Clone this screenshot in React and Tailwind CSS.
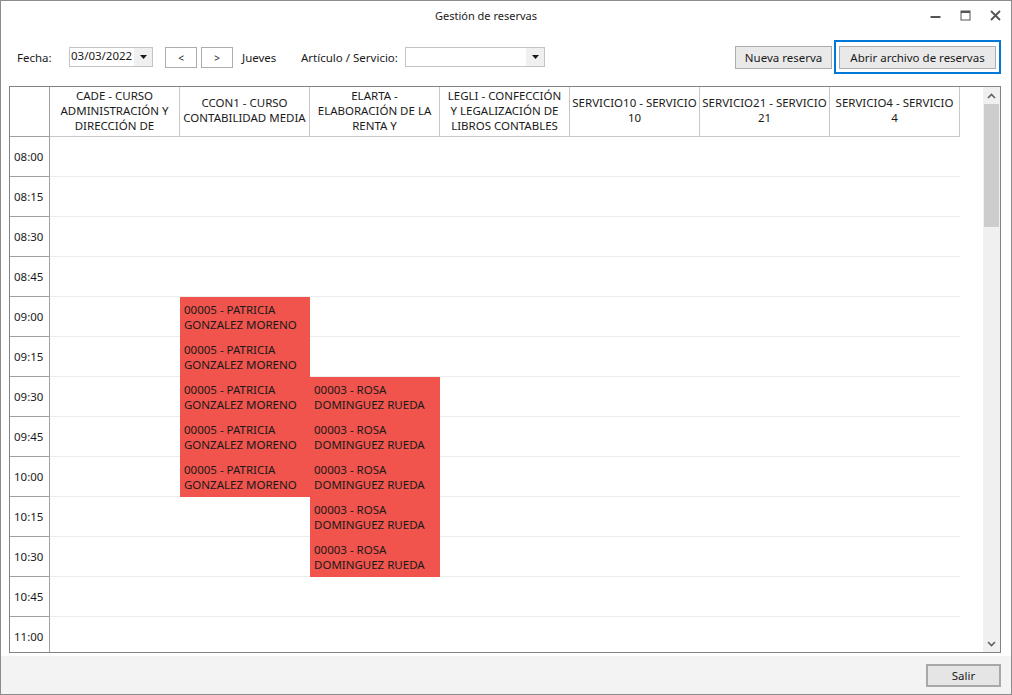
import React from 'react';

const columns = [
  ['CADE - CURSO', 'ADMINISTRACIÓN Y', 'DIRECCIÓN DE'],
  ['CCON1 - CURSO', 'CONTABILIDAD MEDIA'],
  ['ELARTA -', 'ELABORACIÓN DE LA', 'RENTA Y'],
  ['LEGLI - CONFECCIÓN', 'Y LEGALIZACIÓN DE', 'LIBROS CONTABLES'],
  ['SERVICIO10 - SERVICIO', '10'],
  ['SERVICIO21 - SERVICIO', '21'],
  ['SERVICIO4 - SERVICIO', '4'],
];

const times = ['08:00', '08:15', '08:30', '08:45', '09:00', '09:15', '09:30', '09:45', '10:00', '10:15', '10:30', '10:45', '11:00'];

const PATRICIA = ['00005 - PATRICIA', 'GONZALEZ MORENO'];
const ROSA = ['00003 - ROSA', 'DOMINGUEZ RUEDA'];

// bookings by time -> column index
const bookings = {
  '09:00': { 1: PATRICIA },
  '09:15': { 1: PATRICIA },
  '09:30': { 1: PATRICIA, 2: ROSA },
  '09:45': { 1: PATRICIA, 2: ROSA },
  '10:00': { 1: PATRICIA, 2: ROSA },
  '10:15': { 2: ROSA },
  '10:30': { 2: ROSA },
};

const Arrow = () => (
  <svg width="7" height="4" viewBox="0 0 7 4">
    <path d="M0 0h7L3.5 4z" fill="#1a1a1a" />
  </svg>
);

const Chevron = ({ down }) => (
  <svg width="9" height="6" viewBox="0 0 9 6">
    <path d={down ? 'M1 1l3.5 3.5L8 1' : 'M1 5l3.5-3.5L8 5'} fill="none" stroke="#606060" strokeWidth="1.6" />
  </svg>
);

export default function App() {
  return (
    <div
      className="w-[1012px] h-[695px] border border-[#8c8c8c] bg-white flex flex-col text-[11.5px] leading-[15px] text-[#1a1a1a] overflow-hidden"
      style={{ fontFamily: '"Noto Sans", "Open Sans", sans-serif' }}
    >
      {/* Title bar */}
      <div className="h-[29px] flex items-center shrink-0">
        <div className="ml-[434px] text-[11px] text-[#222]">Gestión de reservas</div>
        <div className="flex-1" />
        <div className="flex items-center gap-[19px] pr-[10px]">
          <svg width="11" height="11" viewBox="0 0 11 11">
            <rect x="0.5" y="6" width="10" height="2" fill="#555" />
          </svg>
          <svg width="11" height="11" viewBox="0 0 11 11">
            <rect x="1" y="1" width="9" height="9" fill="none" stroke="#555" strokeWidth="1" />
            <rect x="1" y="1" width="9" height="2" fill="#555" />
          </svg>
          <svg width="11" height="11" viewBox="0 0 11 11">
            <path d="M1 1l9 9M10 1l-9 9" stroke="#555" strokeWidth="1.8" />
          </svg>
        </div>
      </div>

      {/* Toolbar */}
      <div className="h-[56px] shrink-0 pt-[10px]">
        <div className="h-[34px] flex items-center">
          <span className="ml-[16px] w-[52px]">Fecha:</span>
          <div className="w-[84px] h-[20px] border border-[#c4c4c4] flex items-stretch">
            <span className="flex-1 pl-[1px] leading-[16px]">03/03/2022</span>
            <span className="w-[18px] bg-[#f0f0f0] flex items-center justify-center">
              <Arrow />
            </span>
          </div>
          <button className="ml-[12px] w-[32px] h-[21px] border border-[#adadad] bg-white flex items-center justify-center text-[10px] pt-[2px]">&lt;</button>
          <button className="ml-[4px] w-[32px] h-[21px] border border-[#adadad] bg-white flex items-center justify-center text-[10px] pt-[2px]">&gt;</button>
          <span className="ml-[9px] w-[59px]">Jueves</span>
          <span className="w-[104px]">Artículo / Servicio:</span>
          <div className="w-[140px] h-[20px] border border-[#c4c4c4] flex items-stretch">
            <span className="flex-1" />
            <span className="w-[18px] bg-[#f0f0f0] flex items-center justify-center">
              <Arrow />
            </span>
          </div>
          <div className="flex-1" />
          <button className="w-[97px] h-[23px] border border-[#adadad] bg-[#e9e9e9]">Nueva reserva</button>
          <div className="ml-[2px] mr-[10px] w-[167px] h-[34px] border-2 border-[#0078d7] flex items-center justify-center">
            <button className="w-[157px] h-[23px] border border-[#adadad] bg-[#e9e9e9]">Abrir archivo de reservas</button>
          </div>
        </div>
      </div>

      {/* Schedule grid */}
      <div className="ml-[8px] w-[992px] h-[567px] shrink-0 border border-[#828282] flex overflow-hidden">
        <div className="flex-1 overflow-hidden">
          {/* Header */}
          <div className="flex h-[50px]">
            <div className="w-[40px] border-r border-b border-[#a0a0a0]" />
            {columns.map((lines, i) => (
              <div
                key={i}
                className="w-[130px] border-r border-b border-[#c8c8c8] flex flex-col items-center justify-center text-center pb-[3px]"
              >
                {lines.map((l) => (
                  <span key={l} className="whitespace-nowrap">{l}</span>
                ))}
              </div>
            ))}
          </div>
          {/* Rows */}
          {times.map((t) => (
            <div key={t} className="flex h-[40px]">
              <div className="w-[40px] shrink-0 border-r border-b border-[#a0a0a0] flex items-center pl-[4px]">{t}</div>
              {columns.map((_, ci) => {
                const b = bookings[t]?.[ci];
                return b ? (
                  <div
                    key={ci}
                    className="w-[130px] shrink-0 bg-[#f0544c] border-b border-[#f0544c] flex flex-col justify-center pl-[4px] whitespace-nowrap"
                  >
                    <span>{b[0]}</span>
                    <span>{b[1]}</span>
                  </div>
                ) : (
                  <div key={ci} className="w-[130px] shrink-0 border-b border-[#ececec]" />
                );
              })}
            </div>
          ))}
        </div>
        {/* Scrollbar */}
        <div className="w-[17px] shrink-0 bg-[#f0f0f0] flex flex-col">
          <div className="h-[17px] flex items-center justify-center">
            <Chevron />
          </div>
          <div className="mx-[1px] h-[123px] bg-[#cdcdcd]" />
          <div className="flex-1" />
          <div className="h-[17px] flex items-center justify-center">
            <Chevron down />
          </div>
        </div>
      </div>

      <div className="h-[3px] shrink-0" />

      {/* Footer */}
      <div className="flex-1 bg-[#f3f3f3] flex items-start justify-end pt-[8px] pr-[10px]">
        <button className="w-[75px] h-[23px] border-2 border-[#a8a8a8] bg-[#e5e5e5]">Salir</button>
      </div>
    </div>
  );
}
